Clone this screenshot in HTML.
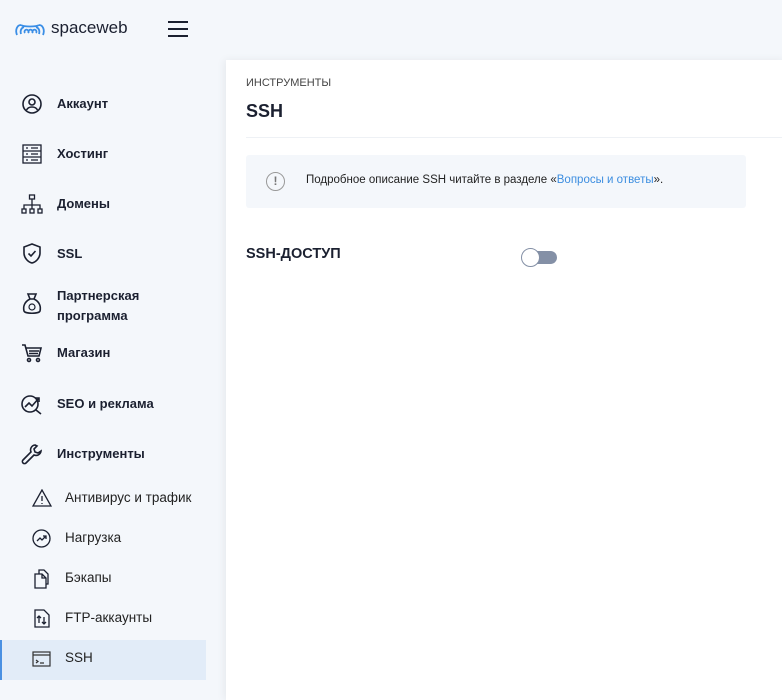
<!DOCTYPE html><html><head><meta charset="utf-8"><style>
*{margin:0;padding:0;box-sizing:border-box}
body{width:782px;height:688px;overflow:hidden;background:#f4f7fb;font-family:"Liberation Sans",sans-serif;color:#1b2030;position:relative}
.a{position:absolute}
.nav{font-weight:bold;font-size:13px;left:57px}
.sub{font-size:13.5px;left:65px;color:#222}
svg{position:absolute;fill:none;stroke:#1b2030;stroke-width:1.6}
</style></head><body>
<svg style="left:14px;top:21px;stroke:#3a8ee6;stroke-width:1.8" width="32" height="16" viewBox="0 0 32 16"><path d="M3 14C1 9 3 4 7 4M29 14C31 9 29 4 25 4M7 4C10 6 22 6 25 4M7 13c-1-3 0-6 3-7M25 13c1-3 0-6-3-7M11 12a2 2 0 1 1 3 0M15 12a2 2 0 1 1 3 0M19 12a2 2 0 1 1 3 0"/></svg>
<div class="a" style="left:51px;top:18px;font-size:17px;color:#1b2030">spaceweb</div>
<div class="a" style="left:168px;top:21px;width:20px;height:2px;background:#1b2030;box-shadow:0 7px 0 #1b2030,0 14px 0 #1b2030"></div>

<svg style="left:22px;top:94px" width="20" height="20" viewBox="0 0 20 20"><circle cx="10" cy="10" r="9"/><circle cx="10" cy="8" r="3"/><path d="M4.5 16c2-4 9-4 11 0"/></svg>
<div class="a nav" style="top:96px">Аккаунт</div>
<svg style="left:22px;top:144px;stroke-width:1.3" width="20" height="20" viewBox="0 0 20 20"><rect x="1" y="1" width="18" height="18"/><path d="M1 7h18M1 13h18M4 4h2M9 4h7M4 10h2M9 10h7M4 16h2M9 16h7"/></svg>
<div class="a nav" style="top:146px">Хостинг</div>
<svg style="left:21px;top:194px;stroke-width:1.3" width="22" height="20" viewBox="0 0 22 20"><rect x="8.5" y="1" width="5" height="4"/><path d="M11 5v5M3 15v-4h16v4M11 10v5"/><rect x="1" y="15" width="4" height="4"/><rect x="9" y="15" width="4" height="4"/><rect x="17" y="15" width="4" height="4"/></svg>
<div class="a nav" style="top:196px">Домены</div>
<svg style="left:23px;top:243px" width="18" height="21" viewBox="0 0 18 21"><path d="M9 1L1 4v6c0 5 4 9 8 10 4-1 8-5 8-10V4z"/><path d="M5.5 10.5l2.5 2.5 4.5-5"/></svg>
<div class="a nav" style="top:246px">SSL</div>
<svg style="left:22px;top:293px" width="20" height="22" viewBox="0 0 20 22"><path d="M6 1h8l-2 5H8zM8 6C2 9 1 14 2 18c1 3 15 3 16 0 1-4 0-9-6-12"/><circle cx="10" cy="14" r="3" style="stroke-width:1.2"/></svg>
<div class="a nav" style="top:286px;line-height:20px">Партнерская<br>программа</div>
<svg style="left:21px;top:343px" width="22" height="20" viewBox="0 0 22 20"><path d="M1 2h3l3 11h11l2-8H5M8 8h10M8 10.5h9"/><circle cx="8" cy="17" r="1.5"/><circle cx="17" cy="17" r="1.5"/></svg>
<div class="a nav" style="top:345px">Магазин</div>
<svg style="left:21px;top:393px" width="22" height="22" viewBox="0 0 22 22"><circle cx="9" cy="11" r="8"/><path d="M15 17l5 4M4 14l4-4 3 3 7-8M14 5h4v4"/></svg>
<div class="a nav" style="top:396px">SEO и реклама</div>
<svg style="left:21px;top:443px" width="22" height="22" viewBox="0 0 22 22"><path d="M14 2a5 5 0 0 0-4 7L2 17a2 2 0 0 0 3 3l8-8a5 5 0 0 0 7-4l-3 2-3-1-1-3 3-3z"/></svg>
<div class="a nav" style="top:446px">Инструменты</div>

<svg style="left:32px;top:489px;stroke-width:1.3" width="20" height="18" viewBox="0 0 20 18"><path d="M10 1L1 17h18z M10 7v5M10 14v1"/></svg>
<div class="a sub" style="top:490px">Антивирус и трафик</div>
<svg style="left:32px;top:529px;stroke-width:1.3" width="19" height="19" viewBox="0 0 19 19"><circle cx="9.5" cy="9.5" r="8.5"/><path d="M5 12l3-3 2 2 4-4M11 7h3v3"/></svg>
<div class="a sub" style="top:530px">Нагрузка</div>
<svg style="left:34px;top:569px;stroke-width:1.3" width="16" height="20" viewBox="0 0 16 20"><path d="M1 5v14h11V9L8 5zM8 5v4h4M5 5V1h5l4 4v10h-2"/></svg>
<div class="a sub" style="top:570px">Бэкапы</div>
<svg style="left:34px;top:609px;stroke-width:1.3" width="16" height="19" viewBox="0 0 16 19"><path d="M1 1h9l5 5v12H1zM5 14V7M3 9l2-2 2 2M10 8v7M8 13l2 2 2-2"/></svg>
<div class="a sub" style="top:610px">FTP-аккаунты</div>
<div class="a" style="left:0;top:640px;width:206px;height:40px;background:#e2ecf8;border-left:2px solid #4a90e2"></div>
<svg style="left:32px;top:651px;stroke-width:1.2;stroke:#333" width="19" height="16" viewBox="0 0 19 16"><rect x="1" y="1" width="17" height="14"/><path d="M1 4h17M4 9l2 1.5-2 1.5M8 12h4"/></svg>
<div class="a sub" style="top:650px">SSH</div>

<div class="a" style="left:226px;top:60px;width:560px;height:640px;background:#fff;box-shadow:-2px 0 8px rgba(0,0,0,.06)">
<div class="a" style="left:20px;top:17px;font-size:11px;color:#444">ИНСТРУМЕНТЫ</div>
<div class="a" style="left:20px;top:41px;font-size:18px;font-weight:bold">SSH</div>
<div class="a" style="left:20px;top:77px;width:540px;height:1px;background:#eef1f5"></div>
<div class="a" style="left:20px;top:95px;width:500px;height:53px;background:#f4f7fb;border-radius:3px"></div>
<div class="a" style="left:40px;top:112px;width:19px;height:19px;border:1.5px solid #999;border-radius:50%;font-size:12px;font-weight:bold;color:#777;text-align:center;line-height:16px">!</div>
<div class="a" style="left:80px;top:114px;font-size:11.5px;color:#222">Подробное описание SSH читайте в разделе «<span style="color:#3b8de0">Вопросы и ответы</span>».</div>
<div class="a" style="left:20px;top:186px;font-size:14.5px;font-weight:bold">SSH-ДОСТУП</div>
<div class="a" style="left:298px;top:191px;width:33px;height:13px;background:#8490a6;border-radius:7px"></div>
<div class="a" style="left:295px;top:188px;width:19px;height:19px;background:#fff;border:1px solid #8490a6;border-radius:50%"></div>
</div>
</body></html>
